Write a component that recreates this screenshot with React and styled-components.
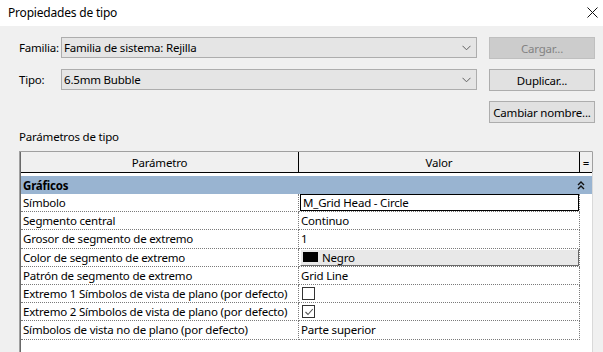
import React from "react";
import styled, { createGlobalStyle } from "styled-components";

const GlobalStyle = createGlobalStyle`
  html, body {
    margin: 0;
    padding: 0;
    background: #f0f0f0;
    overflow: hidden;
  }
  body {
    font-family: "Segoe UI", "Noto Sans", "Open Sans", sans-serif;
    font-size: 11.5px;
    letter-spacing: -0.2px;
    color: #000;
  }
`;

const rows = [
  { name: "Símbolo", kind: "edit", value: "M_Grid Head - Circle" },
  { name: "Segmento central", value: "Continuo" },
  { name: "Grosor de segmento de extremo", value: "1" },
  { name: "Color de segmento de extremo", kind: "color", value: "Negro" },
  { name: "Patrón de segmento de extremo", value: "Grid Line" },
  { name: "Extremo 1 Símbolos de vista de plano (por defecto)", kind: "check", checked: false },
  { name: "Extremo 2 Símbolos de vista de plano (por defecto)", kind: "check", checked: true },
  { name: "Símbolos de vista no de plano (por defecto)", value: "Parte superior" },
];

const Chevron = () => (
  <svg width="9" height="6" viewBox="0 0 9 6">
    <path d="M0.5 0.8 L4.5 4.8 L8.5 0.8" fill="none" stroke="#606060" strokeWidth="1" />
  </svg>
);

const CloseIcon = () => (
  <svg width="11" height="11" viewBox="0 0 11 11">
    <path d="M0.5 0.5 L10.5 10.5 M10.5 0.5 L0.5 10.5" stroke="#111" strokeWidth="1" />
  </svg>
);

const Collapse = () => (
  <svg width="8" height="9" viewBox="0 0 8 9">
    <path d="M1 4 L4 1 L7 4 M1 8 L4 5 L7 8" fill="none" stroke="#111" strokeWidth="1.4" />
  </svg>
);

const Tick = () => (
  <svg width="10" height="10" viewBox="0 0 10 10">
    <path d="M1.5 5 L4 7.5 L8.8 2" fill="none" stroke="#555" strokeWidth="1.1" />
  </svg>
);

const App = () => (
  <Dialog>
    <GlobalStyle />
    <TitleBar>
      <span>Propiedades de tipo</span>
      <CloseIcon />
    </TitleBar>
    <Body>
      <TopGrid>
        <Label>Familia:</Label>
        <Combo>
          <span>Familia de sistema: Rejilla</span>
          <Chevron />
        </Combo>
        <Button disabled>Cargar...</Button>

        <Label>Tipo:</Label>
        <Combo>
          <span>6.5mm Bubble</span>
          <Chevron />
        </Combo>
        <Button>Duplicar...</Button>

        <Spacer />
        <Button>Cambiar nombre...</Button>
      </TopGrid>

      <SectionLabel>Parámetros de tipo</SectionLabel>

      <Table>
        <HeadRow>
          <HeadCell>Parámetro</HeadCell>
          <HeadCell>Valor</HeadCell>
          <HeadCell $narrow>=</HeadCell>
        </HeadRow>
        <GroupRow>
          <span>Gráficos</span>
          <Collapse />
        </GroupRow>
        {rows.map((r) => (
          <Row key={r.name}>
            <NameCell>{r.name}</NameCell>
            <ValueCell>
              {r.kind === "edit" && <EditBox>{r.value}</EditBox>}
              {r.kind === "color" && (
                <ColorButton>
                  <Swatch />
                  {r.value}
                </ColorButton>
              )}
              {r.kind === "check" && <CheckBox>{r.checked && <Tick />}</CheckBox>}
              {!r.kind && <PlainValue>{r.value}</PlainValue>}
            </ValueCell>
            <EndCell />
          </Row>
        ))}
      </Table>
    </Body>
  </Dialog>
);

const Dialog = styled.div`
  width: 603px;
  height: 352px;
  display: flex;
  flex-direction: column;
  background: #f0f0f0;
  overflow: hidden;
`;

const TitleBar = styled.div`
  height: 26px;
  flex: none;
  background: #fff;
  display: flex;
  align-items: center;
  justify-content: space-between;
  padding: 0 5px 2px 8px;
  box-sizing: border-box;
  font-size: 12px;
`;

const Body = styled.div`
  flex: 1;
  display: flex;
  flex-direction: column;
  padding: 11px 8px 0 19px;
  min-height: 0;
`;

const TopGrid = styled.div`
  display: grid;
  grid-template-columns: 42px 428px 106px;
  grid-auto-rows: 22px;
  row-gap: 10px;
  align-items: start;
`;

const Label = styled.div`
  height: 21px;
  display: flex;
  align-items: center;
  white-space: nowrap;
`;

const Spacer = styled.div`
  grid-column: 1 / 3;
`;

const Combo = styled.div`
  width: 416px;
  height: 21px;
  box-sizing: border-box;
  border: 1px solid #adadad;
  background: #e5e5e5;
  display: flex;
  align-items: center;
  justify-content: space-between;
  padding: 0 5px 0 2px;
`;

const Button = styled.div`
  height: 22px;
  box-sizing: border-box;
  border: 1px solid ${(p) => (p.disabled ? "#bfbfbf" : "#adadad")};
  background: ${(p) => (p.disabled ? "#cccccc" : "#e1e1e1")};
  color: ${(p) => (p.disabled ? "#838383" : "#000")};
  display: flex;
  align-items: center;
  justify-content: center;
  white-space: nowrap;
`;

const SectionLabel = styled.div`
  margin-top: 6px;
  height: 16px;
  line-height: 16px;
`;

const Table = styled.div`
  margin-top: 6px;
  width: 574px;
  flex: 1;
  background: #fff;
  border-top: 1px solid #a0a0a0;
  border-left: 1px solid #a0a0a0;
  border-right: 1px solid #d9d9d9;
  box-shadow: inset 1px 0 0 #696969;
  padding-left: 1px;
  box-sizing: border-box;
`;

const HeadRow = styled.div`
  display: grid;
  grid-template-columns: 278px 281px 13px;
  height: 21px;
  background: #f0f0f0;
  border-bottom: 1px solid #000;
  box-sizing: border-box;
`;

const HeadCell = styled.div`
  display: flex;
  align-items: center;
  justify-content: center;
  border-right: 1px solid ${(p) => (p.$narrow ? "#a0a0a0" : "#000")};
  box-sizing: border-box;
`;

const GroupRow = styled.div`
  margin-top: 3px;
  height: 18px;
  background: #99b4d1;
  display: flex;
  align-items: center;
  justify-content: space-between;
  padding: 0 7px 0 2px;
  font-weight: bold;
`;

const Row = styled.div`
  display: grid;
  grid-template-columns: 278px 281px 13px;
  height: 18.2px;
`;

const NameCell = styled.div`
  border-right: 1px dotted #7a7a7a;
  border-bottom: 1px dotted #7a7a7a;
  padding-left: 2px;
  display: flex;
  align-items: center;
  white-space: nowrap;
  overflow: hidden;
`;

const ValueCell = styled.div`
  border-right: 1px dotted #7a7a7a;
  border-bottom: 1px dotted #7a7a7a;
  display: flex;
  align-items: center;
  min-width: 0;
`;

const EndCell = styled.div``;

const PlainValue = styled.span`
  padding-left: 2px;
`;

const EditBox = styled.div`
  flex: 1;
  align-self: stretch;
  border: 1px solid #000;
  margin: 0 0 0 1px;
  padding-left: 2px;
  display: flex;
  align-items: center;
`;

const ColorButton = styled.div`
  flex: 1;
  align-self: stretch;
  background: #e8e8e8;
  border-top: 1px solid #fff;
  border-left: 1px solid #fff;
  border-right: 1px solid #696969;
  border-bottom: 1px solid #696969;
  margin-left: 1px;
  display: flex;
  align-items: center;
  gap: 4px;
  padding-left: 2px;
`;

const Swatch = styled.span`
  width: 15px;
  height: 10px;
  background: #000;
`;

const CheckBox = styled.span`
  width: 13px;
  height: 13px;
  box-sizing: border-box;
  margin-left: 3px;
  border: 1px solid #333;
  background: #fff;
  display: flex;
  align-items: center;
  justify-content: center;
`;

export default App;
